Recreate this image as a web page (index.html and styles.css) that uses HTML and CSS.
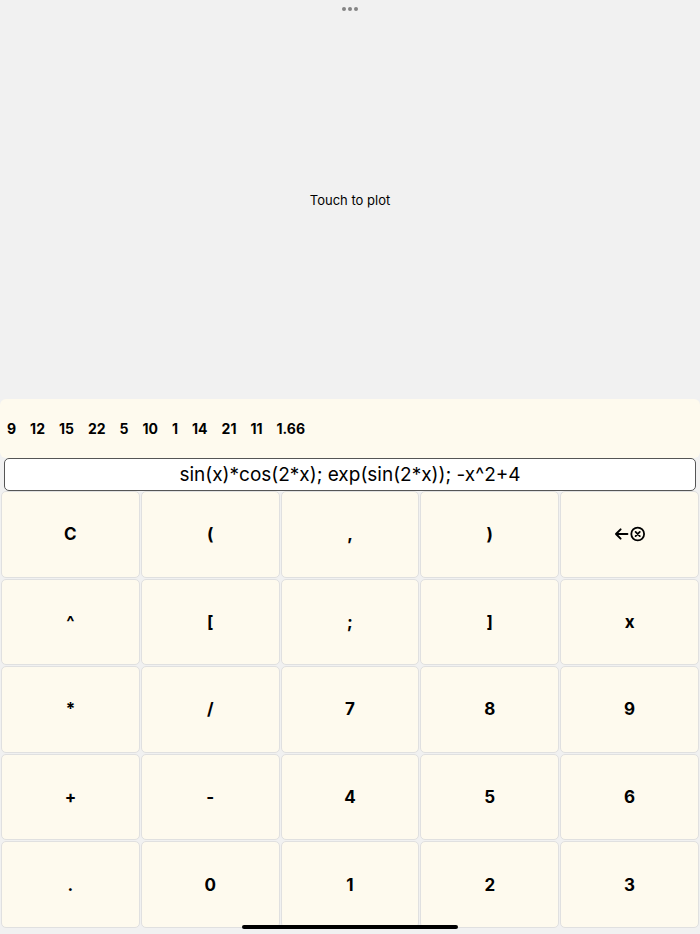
FILE: index.html
```html
<!DOCTYPE html>
<html lang="en">
<head>
    <meta charset="UTF-8">
    <meta name="viewport" content="width=device-width, initial-scale=1.0">
    <title>Plot Calculator</title>
    <link rel="stylesheet" href="styles.css">
</head>
<body>
    <div class="window-dots">
        <span></span><span></span><span></span>
    </div>
    <button type="button" class="plot">Touch to plot</button>
    <div class="history">
        <button type="button">9</button>
        <button type="button">12</button>
        <button type="button">15</button>
        <button type="button">22</button>
        <button type="button">5</button>
        <button type="button">10</button>
        <button type="button">1</button>
        <button type="button">14</button>
        <button type="button">21</button>
        <button type="button">11</button>
        <button type="button">1.66</button>
    </div>
    <input type="text" class="expression" aria-label="Expression" value="sin(x)*cos(2*x); exp(sin(2*x)); -x^2+4">
    <div class="keys">
        <button type="button">C</button>
        <button type="button">(</button>
        <button type="button">,</button>
        <button type="button">)</button>
        <button type="button" aria-label="Delete">
            <svg class="delete-icon" width="32" height="16" viewBox="0 0 32 16" fill="none" stroke="#000" stroke-width="2" stroke-linecap="round" stroke-linejoin="round">
                <path d="M13.4 8H2M6.6 3.4L2 8l4.600 4.600"/>
                <circle cx="23.700" cy="8" r="6.400" stroke-width="1.800"/>
                <path d="M21.600 5.900l4.200 4.200M25.800 5.900l-4.200 4.200" stroke-width="1.800"/>
            </svg>
        </button>
        <button type="button">^</button>
        <button type="button">[</button>
        <button type="button">;</button>
        <button type="button">]</button>
        <button type="button">x</button>
        <button type="button">*</button>
        <button type="button">/</button>
        <button type="button">7</button>
        <button type="button">8</button>
        <button type="button">9</button>
        <button type="button">+</button>
        <button type="button">-</button>
        <button type="button">4</button>
        <button type="button">5</button>
        <button type="button">6</button>
        <button type="button">.</button>
        <button type="button">0</button>
        <button type="button">1</button>
        <button type="button">2</button>
        <button type="button">3</button>
    </div>
    <div class="home-bar"></div>
</body>
</html>
```

FILE: styles.css
```css
* {
    box-sizing: border-box;
}
body {
    display: flex;
    flex-direction: column;
    height: 100vh;
    margin: 0;
    padding-bottom: 6px;
    background-color: #f1f1f1;
    color: #000;
    font-family: Inter, "Liberation Sans", sans-serif;
}
button, input {
    margin: 0;
    padding: 0;
    color: inherit;
    font-family: inherit;
}
button {
    cursor: pointer;
}
/* Multitasking dots over the top edge */
.window-dots {
    position: absolute;
    top: 7px;
    left: 0;
    right: 0;
    display: flex;
    justify-content: center;
    gap: 2px;
}
.window-dots span {
    width: 4px;
    height: 4px;
    border-radius: 50%;
    background-color: #858585;
}
.plot {
    flex: 21 1 0;
    border: none;
    background: none;
    font-size: 13px;
}
.history {
    display: flex;
    align-items: center;
    gap: 14px;
    height: 59px;
    padding: 0 7px;
    border-radius: 6px;
    background-color: #fefaee;
}
.history button {
    border: none;
    background: none;
    font-size: 14px;
    font-weight: 700;
}
.expression {
    height: 33px;
    margin: 0 4px;
    border: 1px solid #555;
    border-radius: 5px;
    background-color: #fff;
    font-size: 19px;
    text-align: center;
}
.keys {
    flex: 23 1 0;
    display: grid;
    grid-template-columns: repeat(5, 1fr);
    grid-template-rows: repeat(5, 1fr);
    gap: 1px;
    padding: 0 1px;
}
.keys button {
    border: 1px solid #e0e0e0;
    border-radius: 5px;
    background-color: #fefaee;
    font-size: 17px;
    font-weight: 700;
}
.delete-icon {
    display: block;
    margin: 0 auto;
}
/* Home indicator lies over the last row */
.home-bar {
    position: absolute;
    bottom: 5px;
    left: 50%;
    width: 216px;
    height: 4px;
    margin-left: -108px;
    border-radius: 2px;
    background-color: #000;
}
```
